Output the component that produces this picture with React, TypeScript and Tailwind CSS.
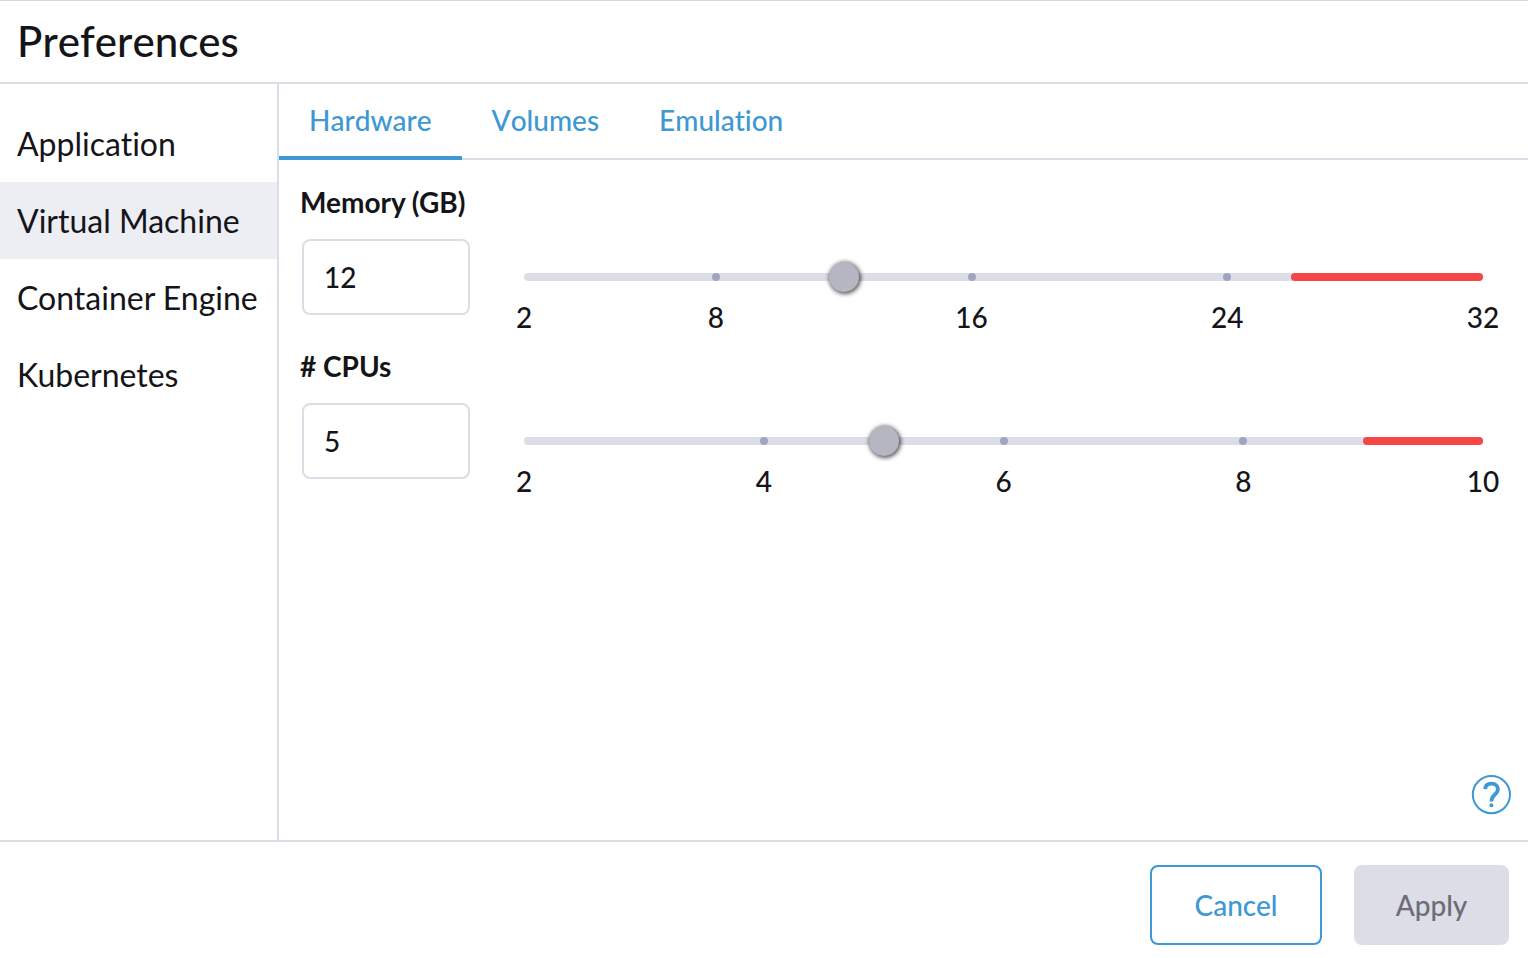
import { useState } from "react";

type Mark = number;

interface ResourceFieldProps {
  id: string;
  label: string;
  min: number;
  max: number;
  initial: number;
  marks: Mark[];
  warnFrom: number;
}

function ResourceField({ id, label, min, max, initial, marks, warnFrom }: ResourceFieldProps) {
  const [value, setValue] = useState(initial);
  const percent = (n: number) => `${((n - min) / (max - min)) * 100}%`;

  return (
    <div className="flex flex-col gap-5">
      <label htmlFor={id} className="text-[28px] leading-[34px] font-bold">
        {label}
      </label>
      <div className="flex gap-[54px] pl-[2px] pr-6">
        <input
          id={id}
          type="text"
          inputMode="numeric"
          value={value}
          onChange={(e) => setValue(Number(e.target.value) || min)}
          className="h-[76px] w-[168px] shrink-0 rounded-lg border-2 border-[#dcdde7] bg-white px-5 text-[28px] font-medium outline-none"
        />
        <div className="flex min-w-0 flex-1 flex-col pt-[34px]">
          <div className="relative h-2 rounded-full bg-[#dcdde7]">
            <div
              className="absolute inset-y-0 right-0 rounded-full bg-[#f64747]"
              style={{ left: percent(warnFrom) }}
            />
            {marks.slice(1, -1).map((m) => (
              <span
                key={m}
                className="absolute top-0 size-2 -translate-x-1/2 rounded-full bg-[#9fa5c0]"
                style={{ left: percent(m) }}
              />
            ))}
            <input
              type="range"
              aria-label={label}
              min={min}
              max={max}
              value={value}
              onChange={(e) => setValue(Number(e.target.value))}
              className="absolute -inset-x-[15px] -top-[11px] h-[30px] cursor-pointer appearance-none bg-transparent outline-none [&::-webkit-slider-thumb]:size-[30px] [&::-webkit-slider-thumb]:appearance-none [&::-webkit-slider-thumb]:rounded-full [&::-webkit-slider-thumb]:bg-[#b6b6c2] [&::-webkit-slider-thumb]:shadow-[1px_1px_4px_1px_rgba(0,0,0,0.65)]"
            />
          </div>
          <div className="relative mt-5 h-8 text-[28px] leading-8 font-medium">
            {marks.map((m) => (
              <span key={m} className="absolute -translate-x-1/2" style={{ left: percent(m) }}>
                {m}
              </span>
            ))}
          </div>
        </div>
      </div>
    </div>
  );
}

const sections = ["Application", "Virtual Machine", "Container Engine", "Kubernetes"];
const tabs = ["Hardware", "Volumes", "Emulation"];

export default function App() {
  const [section, setSection] = useState("Virtual Machine");
  const [tab, setTab] = useState("Hardware");

  return (
    <div className="flex min-h-screen flex-col border-t border-[#d6d6d6] bg-white font-['Lato',sans-serif] text-[#141419] [font-variant-ligatures:none]">
      <header className="border-b-2 border-[#dcdde7] px-[17px] pt-[14px] pb-[15px]">
        <h1 className="text-[42px] leading-[52px] font-medium [font-kerning:none]">Preferences</h1>
      </header>

      <div className="flex flex-1">
        <nav aria-label="Preferences" className="w-[279px] shrink-0 border-r-2 border-[#dcdde7] pt-[21px]">
          {sections.map((s) => (
            <a
              key={s}
              href="#"
              onClick={() => setSection(s)}
              aria-current={s === section ? "page" : undefined}
              className={`flex h-[77px] items-center pl-[17px] text-[32px] whitespace-nowrap ${s === section ? "bg-[#edeef3]" : ""}`}
            >
              {s}
            </a>
          ))}
        </nav>

        <main className="flex min-w-0 flex-1 flex-col">
          <div role="tablist" className="flex border-b-2 border-[#dcdde7]">
            {tabs.map((t) => (
              <button
                key={t}
                type="button"
                role="tab"
                aria-selected={t === tab}
                onClick={() => setTab(t)}
                className={`-mb-[2px] h-[76px] border-b-4 px-[30px] text-[28px] font-medium text-[#3d98d3] [font-kerning:none] ${t === tab ? "border-[#3d98d3]" : "border-transparent"}`}
              >
                {t}
              </button>
            ))}
          </div>

          <div className="flex flex-1 flex-col gap-4 px-[21px] pt-[25px]">
            <ResourceField
              id="memory"
              label="Memory (GB)"
              min={2}
              max={32}
              initial={12}
              marks={[2, 8, 16, 24, 32]}
              warnFrom={26}
            />
            <ResourceField
              id="cpus"
              label="# CPUs"
              min={2}
              max={10}
              initial={5}
              marks={[2, 4, 6, 8, 10]}
              warnFrom={9}
            />
          </div>

          <div className="flex justify-end px-4 pb-6">
            <button type="button" aria-label="Help" className="text-[#3d98d3]">
              <svg viewBox="0 0 42 42" className="size-[42px]" fill="none" stroke="currentColor">
                <circle cx="21.4" cy="20.6" r="18.6" strokeWidth="2" />
                <path
                  d="M15.2 15.2C15.4 11.6 17.900 9.700 21.400 9.700c3.800 0 6.500 2.100 6.500 5.500 0 2.500-1.500 4-3.500 5.800-2.100 1.800-2.900 3-2.900 6.600"
                  strokeWidth="3.8"
                />
                <circle cx="21.4" cy="31.2" r="2" fill="currentColor" stroke="none" />
              </svg>
            </button>
          </div>
        </main>
      </div>

      <footer className="flex justify-end gap-8 border-t-2 border-[#dcdde7] pt-[23px] pr-[19px] pb-[13px] text-[28px] font-medium">
        <button type="button" className="h-20 w-[172px] rounded-lg border-2 border-[#3d98d3] text-[#3d98d3]">
          Cancel
        </button>
        <button type="button" disabled className="h-20 w-[155px] rounded-lg bg-[#dcdde7] text-[#6c6c76]">
          Apply
        </button>
      </footer>
    </div>
  );
}
